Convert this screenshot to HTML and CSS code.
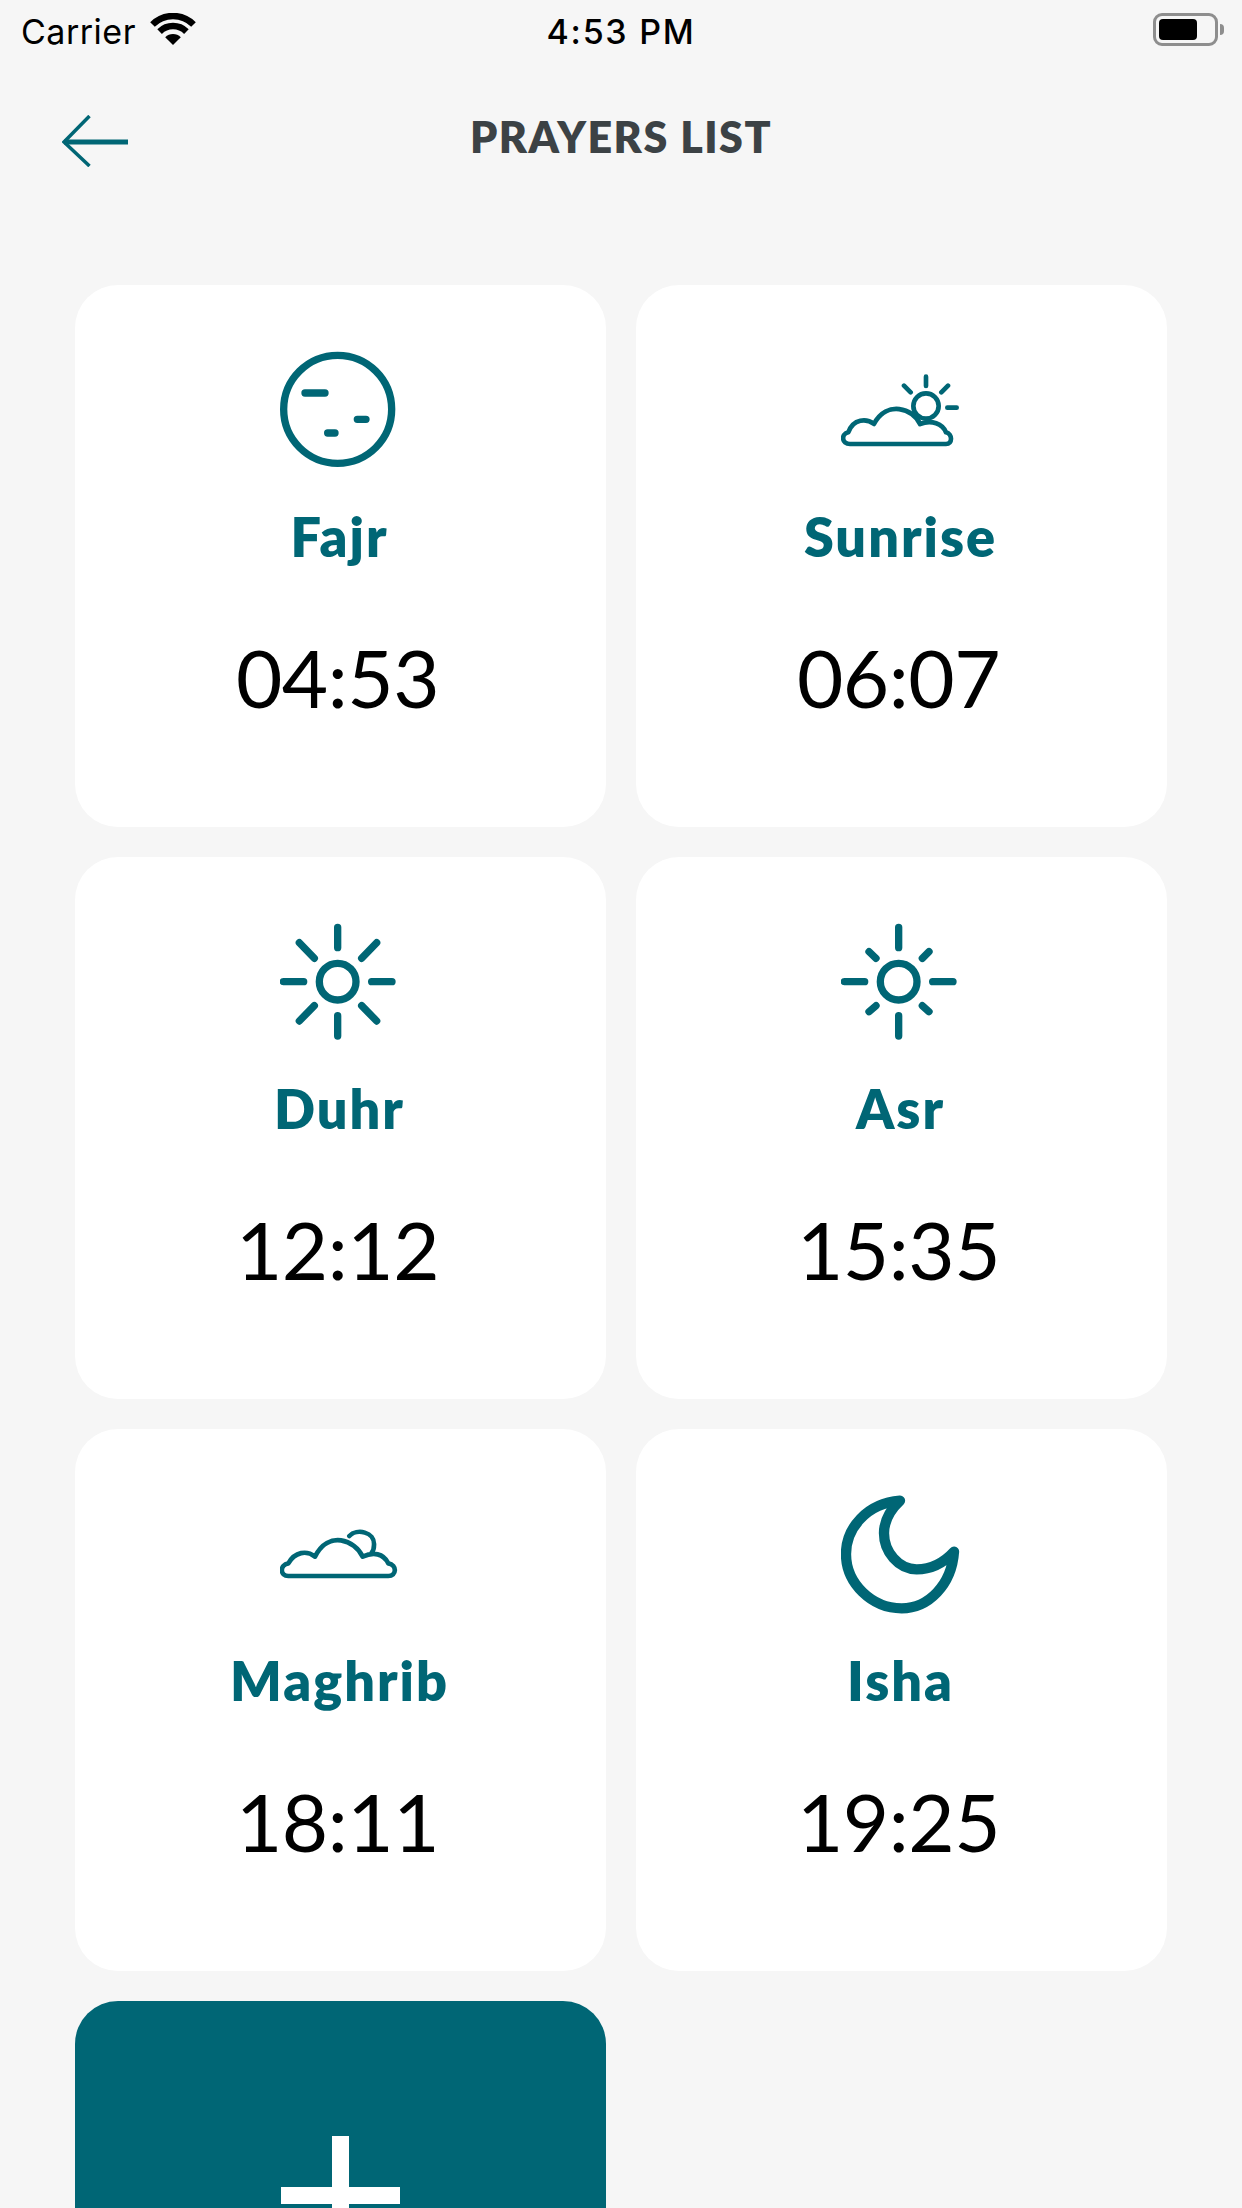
FILE: index.html
```html
<!DOCTYPE html>
<html lang="en">
<head>
<meta charset="utf-8">
<title>Prayers List</title>
<link rel="stylesheet" href="styles.css">
</head>
<body>
<div class="screen">
  <div class="status">
    <div class="status-left">
      <span>Carrier</span>
      <svg class="wifi" viewBox="0 0 46 32"><path class="wifi-arc" d="M2.5 11.5 A29 29 0 0 1 43.5 11.5"/><path class="wifi-arc" d="M9.6 18.6 A19 19 0 0 1 36.4 18.6"/><path class="wifi-dot" d="M23 32 L15.2 24.2 A11 11 0 0 1 30.8 24.2 Z"/></svg>
    </div>
    <div class="status-time">4:53 PM</div>
    <div class="status-right">
      <div class="battery"><div class="battery-fill"></div></div>
      <div class="battery-nub"></div>
    </div>
  </div>
  <header class="nav">
    <svg class="back" viewBox="0 0 66 52"><path class="back-head" d="M27.5 1 L2 27 L27.5 51"/><path class="back-shaft" d="M2 27 H66"/></svg>
    <h1 class="title">PRAYERS LIST</h1>
    <span></span>
  </header>
  <main class="grid">
    <section class="card">
      <svg class="icon" viewBox="120 90 360 360"><circle class="s20" cx="293" cy="268" r="162"/><path class="s20" d="M195 219 H255 M352 298 H378 M263 339 H285"/></svg>
      <h2 class="name">Fajr</h2>
      <div class="time">04:53</div>
    </section>
    <section class="card">
      <svg class="icon" viewBox="123 30 360 360"><circle class="s12" cx="378" cy="198" r="38"/><path class="s12" d="M150 312 H438 C458 312,458 282,438 277 C428 252,395 238,360 252 C340 205,260 180,222 252 C200 235,160 235,145 277 C122 282,125 312,150 312 Z M378 110 V138 M312 137 L332 157 M444 137 L424 157 M442 203 H470"/></svg>
      <h2 class="name">Sunrise</h2>
      <div class="time">06:07</div>
    </section>
    <section class="card">
      <svg class="icon" viewBox="60 36 360 360"><circle class="s20" cx="233" cy="215" r="55"/><path class="s20" d="M233 52 V113 M233 317 V378 M70 215 H131 M335 215 H396 M118 98 L163 145 M350 98 L305 145 M163 287 L118 333 M305 287 L350 333"/></svg>
      <h2 class="name">Duhr</h2>
      <div class="time">12:12</div>
    </section>
    <section class="card">
      <svg class="icon" viewBox="63 36 360 360"><circle class="s20" cx="236" cy="215" r="55"/><path class="s20" d="M236 52 V113 M236 317 V378 M73 215 H134 M338 215 H399 M147 125 L168 145 M327 125 L307 145 M168 287 L147 305 M307 287 L327 305"/></svg>
      <h2 class="name">Asr</h2>
      <div class="time">15:35</div>
    </section>
    <section class="card">
      <svg class="icon" viewBox="60 -48 360 360"><path class="s12" d="M85 198 H385 C410 198,412 165,385 160 C370 130,340 125,308 140 C285 90,205 60,165 140 C140 120,105 125,85 160 C58 165,60 198,85 198 Z M268 78 C290 55,345 65,342 105 C342 115,340 122,335 128"/></svg>
      <h2 class="name">Maghrib</h2>
      <div class="time">18:11</div>
    </section>
    <section class="card">
      <svg class="icon" viewBox="63 42 360 360"><path class="s28" d="M240 62 C140 70,78 145,78 222 C78 310,155 385,245 385 C325 385,395 315,402 215 C365 255,325 268,290 268 C235 268,192 215,192 160 C192 125,210 90,240 62 Z"/></svg>
      <h2 class="name">Isha</h2>
      <div class="time">19:25</div>
    </section>
    <section class="card card-add">
      <div class="plus"></div>
    </section>
  </main>
</div>
</body>
</html>
```
FILE: styles.css
```css
* { box-sizing: border-box; }
html, body { margin: 0; padding: 0; }
body { background: #f6f6f6; font-family: "Lato", sans-serif; }
.screen { width: 1242px; height: 2208px; overflow: hidden; background: #f6f6f6; }

.status { display: grid; grid-template-columns: 1fr auto 1fr; align-items: center; height: 60px; padding: 2px 18px 0 21px; font-family: "Inter", sans-serif; font-size: 34px; color: #000; }
.status-left { display: flex; align-items: center; gap: 14px; letter-spacing: 0.5px; }
.wifi { width: 46px; height: 32px; margin-top: -5px; }
.wifi-arc { fill: none; stroke: #000; stroke-width: 6.5; }
.wifi-dot { fill: #000; }
.status-time { margin-left: -3px; font-weight: 500; letter-spacing: 1.7px; }
.status-right { display: flex; align-items: center; justify-content: flex-end; gap: 2px; margin-top: -3px; }
.battery { width: 65px; height: 33px; border: 3px solid #8e8e8e; border-radius: 9px; padding: 3px; }
.battery-fill { width: 38px; height: 21px; background: #000; border-radius: 4px; }
.battery-nub { width: 4px; height: 11px; background: #8e8e8e; border-radius: 0 4px 4px 0; }

.nav { display: grid; grid-template-columns: 1fr auto 1fr; align-items: center; height: 76px; padding: 0 62px; margin-top: 43px; }
.back { width: 66px; height: 52px; }
.back-head { fill: none; stroke: #006675; stroke-width: 3.5; }
.back-shaft { fill: none; stroke: #006675; stroke-width: 5; }
.title { margin: -8px 0 0; font-size: 43px; line-height: 50px; font-weight: 800; letter-spacing: 1.5px; color: #3c4245; }

.grid { display: grid; grid-template-columns: 531px 531px; column-gap: 30px; row-gap: 30px; grid-auto-rows: 542px; padding: 105.5px 75px 0; }
.card { display: flex; flex-direction: column; align-items: center; background: #fff; border-radius: 43px; padding-top: 65.5px; }
.icon { display: block; width: 120px; height: 120px; margin-left: -1px; fill: none; stroke: #006675; stroke-linecap: round; stroke-linejoin: round; }
.s12 { stroke-width: 14; }
.s20 { stroke-width: 22; }
.s28 { stroke-width: 31; }
.name { margin: 37px 0 0 -2px; font-size: 54px; line-height: 60px; font-weight: 800; letter-spacing: 2px; color: #006675; }
.time { margin: 65px 0 0 -6px; font-size: 80px; line-height: 90px; letter-spacing: -0.5px; color: #000; }
.card-add { background: #006675; padding-top: 135.5px; }
.plus { position: relative; width: 119px; height: 119px; }
.plus::before { content: ""; position: absolute; left: 51px; top: 0; width: 17px; height: 119px; background: #fff; }
.plus::after { content: ""; position: absolute; left: 0; top: 51px; width: 119px; height: 17px; background: #fff; }
```
